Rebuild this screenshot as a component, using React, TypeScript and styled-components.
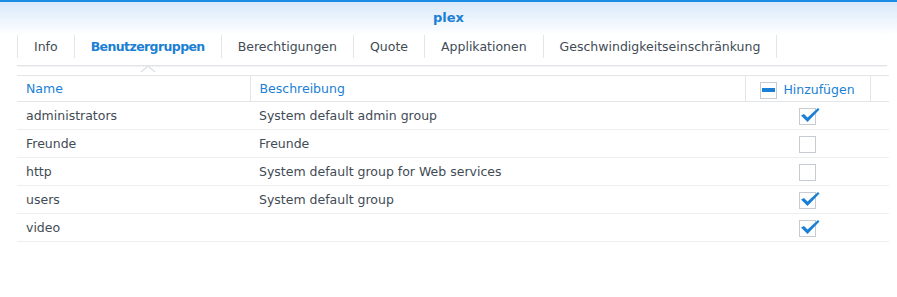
import React from "react";
import styled, { createGlobalStyle } from "styled-components";

const GlobalStyle = createGlobalStyle`
  body {
    margin: 0;
    background: #fff;
    font-family: "DejaVu Sans", Verdana, sans-serif;
    font-size: 12.5px;
    color: #414b55;
  }
`;

const Window = styled.div`
  width: 897px;
  height: 297px;
  background: linear-gradient(to bottom, #d8e9fb 0px, #eef5fd 18px, #ffffff 34px);
  border-top: 2px solid #1b8ce3;
  box-sizing: border-box;
`;

const Title = styled.div`
  height: 31px;
  line-height: 31px;
  text-align: center;
  font-weight: bold;
  font-size: 13px;
  color: #1a7fd4;
`;

const Body = styled.div`
  padding: 0 10px 0 17px;
`;

const TabBar = styled.div`
  display: flex;
  align-items: center;
  height: 32px;
  border-bottom: 1px solid #dfe3e7;
  box-shadow: 0 1px 1px rgba(0, 0, 0, 0.04);
`;

const Tab = styled.div<{ $active?: boolean; $first?: boolean }>`
  position: relative;
  height: 23px;
  line-height: 23px;
  padding: 0 16px;
  margin-top: -6px;
  border-right: 1px solid #e3e6e9;
  border-left: ${(p) => (p.$first ? "1px solid #e3e6e9" : "none")};
  color: ${(p) => (p.$active ? "#1a7fd4" : "#414b55")};
  font-weight: ${(p) => (p.$active ? "bold" : "normal")};
  letter-spacing: ${(p) => (p.$active ? "-0.6px" : "0")};
  white-space: nowrap;

  ${(p) =>
    p.$active &&
    `
    &::before, &::after {
      content: "";
      position: absolute;
      left: 50%;
      width: 0;
      height: 0;
      border-style: solid;
      border-color: transparent;
      transform: translateX(-50%);
    }
    &::before {
      bottom: -14px;
      border-width: 0 8px 7px 8px;
      border-bottom-color: #dfe3e7;
    }
    &::after {
      bottom: -15px;
      border-width: 0 7px 6px 7px;
      border-bottom-color: #ffffff;
    }
  `}
`;

const Table = styled.table`
  width: 870px;
  margin-top: 9px;
  border-collapse: collapse;
  table-layout: fixed;
`;

const HeadCell = styled.th<{ $w: number; $center?: boolean }>`
  width: ${(p) => p.$w}px;
  height: 26px;
  padding: 0 9px;
  border-top: 1px solid #e3e6e9;
  border-bottom: 1px solid #e3e6e9;
  border-right: 1px solid #e3e6e9;
  text-align: ${(p) => (p.$center ? "center" : "left")};
  font-weight: normal;
  color: #1a80d6;
  box-sizing: border-box;

  &:last-child {
    border-right: none;
  }
`;

const HeadInner = styled.span`
  display: inline-flex;
  align-items: center;
  gap: 6px;
`;

const Row = styled.tr`
  height: 28px;
`;

const Cell = styled.td<{ $center?: boolean }>`
  padding: 0 9px;
  border-bottom: 1px solid #eceef0;
  text-align: ${(p) => (p.$center ? "center" : "left")};
  vertical-align: middle;
  white-space: nowrap;
`;

const Box = styled.span`
  display: inline-flex;
  align-items: center;
  justify-content: center;
  width: 17px;
  height: 17px;
  box-sizing: border-box;
  border: 1px solid #c6ccd2;
  background: #fff;
  vertical-align: middle;
  position: relative;
  top: 1px;
`;

const Dash = styled.span`
  width: 13px;
  height: 4px;
  background: #1a80d6;
`;

const CheckMark = styled.svg`
  position: absolute;
  left: 0;
  top: -3px;
  overflow: visible;
`;

const Check = () => (
  <CheckMark width="20" height="18" viewBox="0 0 20 18">
    <path d="M1 9.5 L4 8 L7.5 11.5 L18 2 L19.5 3.5 L7.5 16 Z" fill="#1a80d6" />
  </CheckMark>
);

const groups = [
  { name: "administrators", desc: "System default admin group", on: true },
  { name: "Freunde", desc: "Freunde", on: false },
  { name: "http", desc: "System default group for Web services", on: false },
  { name: "users", desc: "System default group", on: true },
  { name: "video", desc: "", on: true },
];

const tabs = [
  "Info",
  "Benutzergruppen",
  "Berechtigungen",
  "Quote",
  "Applikationen",
  "Geschwindigkeitseinschränkung",
];

export default function App() {
  return (
    <>
      <GlobalStyle />
      <Window>
        <Title>plex</Title>
        <Body>
          <TabBar>
            {tabs.map((t, i) => (
              <Tab key={t} $first={i === 0} $active={i === 1}>
                {t}
              </Tab>
            ))}
          </TabBar>
          <Table>
            <thead>
              <tr>
                <HeadCell $w={233}>Name</HeadCell>
                <HeadCell $w={495}>Beschreibung</HeadCell>
                <HeadCell $w={125} $center>
                  <HeadInner>
                    <Box>
                      <Dash />
                    </Box>
                    Hinzufügen
                  </HeadInner>
                </HeadCell>
                <HeadCell $w={17} />
              </tr>
            </thead>
            <tbody>
              {groups.map((g) => (
                <Row key={g.name}>
                  <Cell>{g.name}</Cell>
                  <Cell>{g.desc}</Cell>
                  <Cell $center>
                    <Box>{g.on && <Check />}</Box>
                  </Cell>
                  <Cell />
                </Row>
              ))}
            </tbody>
          </Table>
        </Body>
      </Window>
    </>
  );
}
